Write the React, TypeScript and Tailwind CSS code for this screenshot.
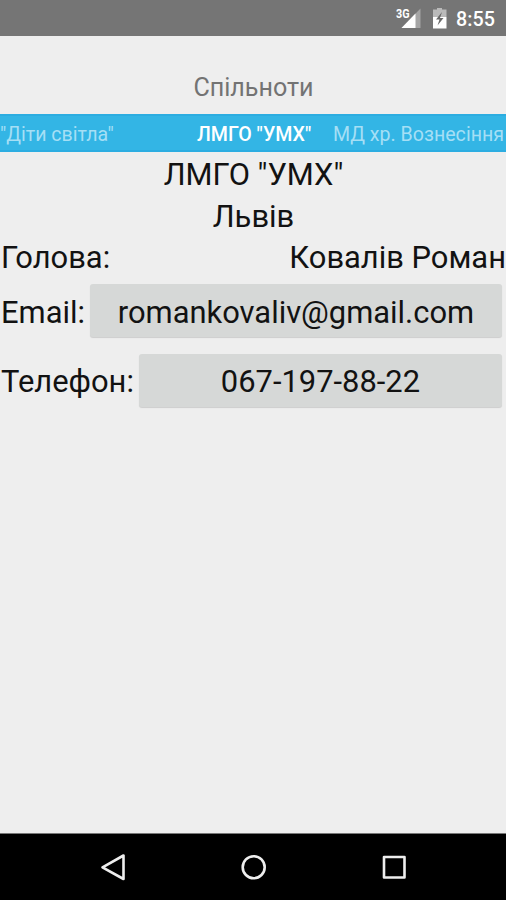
import { type ReactNode } from 'react';

const TABS = ['"Діти світла"', 'ЛМГО "УМХ"', 'МД хр. Вознесіння'];

function StatusBar() {
  return (
    <header className="flex h-9 shrink-0 items-center justify-end bg-[#757575] pr-[10px] text-white">
      <svg className="h-9 w-[60px]" viewBox="0 0 60 36" fill="none">
        <path d="M28.500 8.500V28H9.500Z" fill="#fff" fillOpacity=".35" />
        <path d="M23.500 13.500V28H9.500Z" fill="#fff" />
        <text x="4" y="17.500" fill="#fff" fontSize="13" fontWeight="700" textLength="13.500" lengthAdjust="spacingAndGlyphs">3G</text>
        <path d="M45 9.500v-1.500h5V9.500h4.500v7.500H41V9.500Z" fill="#fff" fillOpacity=".5" />
        <path d="M41 17h13.500v11.500H41Z" fill="#fff" />
        <path d="M50 12l-6 7.500h3.500L45.500 25.500l6-7.500h-3.500Z" fill="#686868" />
      </svg>
      <span className="ml-1 w-[40px] whitespace-nowrap pt-1 text-[19.700px] font-medium leading-9 tracking-[0.1px]">8:55</span>
    </header>
  );
}

function ContactRow({ label, children }: { label: string; children: ReactNode }) {
  return (
    <div className="flex h-[69.500px] items-center pr-[4px]">
      <span className="mr-[5px] whitespace-nowrap pt-px">{label}</span>
      <button className="mb-[2px] h-[53px] flex-1 rounded-[3px] bg-[#d6d8d7] pt-[3px] shadow-[0_1px_1px_rgba(0,0,0,0.14)]">
        {children}
      </button>
    </div>
  );
}

function NavigationBar() {
  return (
    <nav className="flex h-[67px] shrink-0 items-center justify-around border-t border-[#777] bg-black px-[43px]">
      <svg className="h-10 w-10" viewBox="0 0 40 40" fill="none" stroke="#eee" strokeWidth="2.600" strokeLinejoin="round">
        <path d="M30.500 8.500v23.500L9.500 20.300Z" />
      </svg>
      <svg className="h-10 w-10" viewBox="0 0 40 40" fill="none" stroke="#eee" strokeWidth="2.600">
        <circle cx="20.700" cy="20.200" r="11" />
      </svg>
      <svg className="h-10 w-10" viewBox="0 0 40 40" fill="none" stroke="#eee" strokeWidth="2.600" strokeLinejoin="round">
        <path d="M11 10h20.500v20.500H11Z" />
      </svg>
    </nav>
  );
}

export default function App() {
  return (
    <div className="flex h-[900px] w-[506px] flex-col overflow-hidden bg-[#eee] font-['Roboto','Noto_Sans',sans-serif] text-[#121212]">
      <StatusBar />
      <h1 className="h-[78px] shrink-0 pl-px pt-[34px] text-center text-[25.100px] leading-9 text-[#737373]">Спільноти</h1>
      <div className="flex h-[38px] shrink-0 items-center justify-between whitespace-nowrap border-y-2 border-[#2cade1] bg-[#33b5e5] pr-[2px] pt-[3px] text-[19.600px] text-[#a5dff5]">
        <span className="w-[197px]">{TABS[0]}</span>
        <span className="flex-1 font-medium text-white">{TABS[1]}</span>
        <span>{TABS[2]}</span>
      </div>
      <main className="flex-1 pl-px pt-[2px] text-[30.900px] leading-[41px]">
        <p className="text-center">ЛМГО "УМХ"</p>
        <p className="pt-px text-center">Львів</p>
        <div className="flex justify-between">
          <span>Голова:</span>
          <span>Ковалів Роман</span>
        </div>
        <div className="-mt-px">
          <ContactRow label="Email:">romankovaliv@gmail.com</ContactRow>
          <ContactRow label="Телефон:">067-197-88-22</ContactRow>
        </div>
      </main>
      <NavigationBar />
    </div>
  );
}
